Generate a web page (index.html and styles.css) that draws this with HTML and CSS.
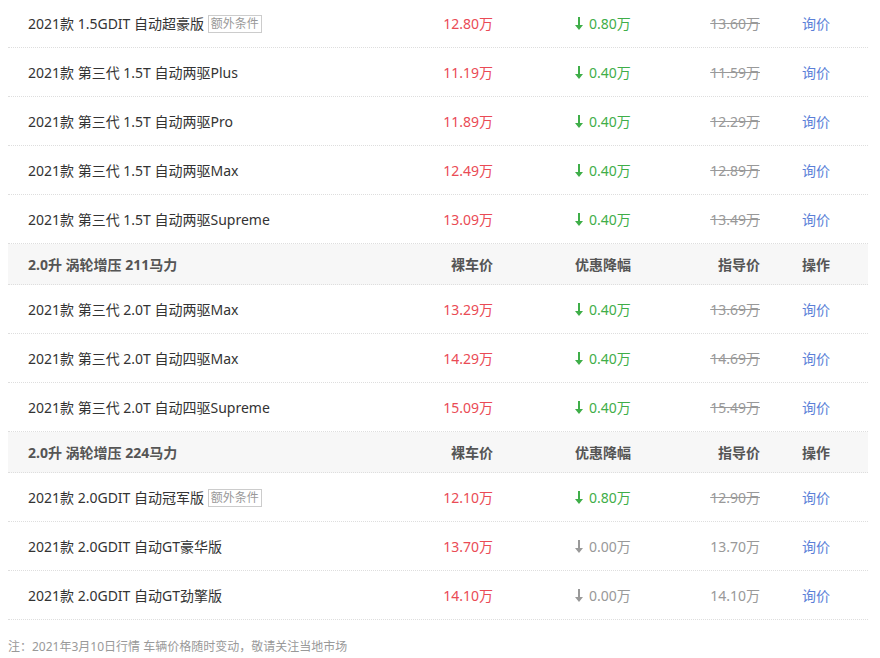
FILE: index.html
```html
<!DOCTYPE html>
<html lang="zh-CN">

<head>
  <meta charset="UTF-8">
  <title>车型报价</title>
  <link rel="stylesheet" href="styles.css">
</head>

<body>
  <div id="price-list">
    <div class="row">
      <div class="cell name">2021款 1.5GDIT 自动超豪版 <span class="tag">额外条件</span></div>
      <div class="cell price">12.80万</div>
      <div class="cell cut"><svg class="arrow" viewBox="0 0 8 13"><path d="M3 0h2v8h3l-4 5l-4-5h3z"/></svg>0.80万</div>
      <div class="cell guide old">13.60万</div>
      <div class="cell action"><a href="#">询价</a></div>
    </div>
    <div class="row">
      <div class="cell name">2021款 第三代 1.5T 自动两驱Plus</div>
      <div class="cell price">11.19万</div>
      <div class="cell cut"><svg class="arrow" viewBox="0 0 8 13"><path d="M3 0h2v8h3l-4 5l-4-5h3z"/></svg>0.40万</div>
      <div class="cell guide old">11.59万</div>
      <div class="cell action"><a href="#">询价</a></div>
    </div>
    <div class="row">
      <div class="cell name">2021款 第三代 1.5T 自动两驱Pro</div>
      <div class="cell price">11.89万</div>
      <div class="cell cut"><svg class="arrow" viewBox="0 0 8 13"><path d="M3 0h2v8h3l-4 5l-4-5h3z"/></svg>0.40万</div>
      <div class="cell guide old">12.29万</div>
      <div class="cell action"><a href="#">询价</a></div>
    </div>
    <div class="row">
      <div class="cell name">2021款 第三代 1.5T 自动两驱Max</div>
      <div class="cell price">12.49万</div>
      <div class="cell cut"><svg class="arrow" viewBox="0 0 8 13"><path d="M3 0h2v8h3l-4 5l-4-5h3z"/></svg>0.40万</div>
      <div class="cell guide old">12.89万</div>
      <div class="cell action"><a href="#">询价</a></div>
    </div>
    <div class="row">
      <div class="cell name">2021款 第三代 1.5T 自动两驱Supreme</div>
      <div class="cell price">13.09万</div>
      <div class="cell cut"><svg class="arrow" viewBox="0 0 8 13"><path d="M3 0h2v8h3l-4 5l-4-5h3z"/></svg>0.40万</div>
      <div class="cell guide old">13.49万</div>
      <div class="cell action"><a href="#">询价</a></div>
    </div>

    <div class="row group">
      <div class="cell name">2.0升 涡轮增压 211马力</div>
      <div class="cell price">裸车价</div>
      <div class="cell cut">优惠降幅</div>
      <div class="cell guide">指导价</div>
      <div class="cell action">操作</div>
    </div>
    <div class="row">
      <div class="cell name">2021款 第三代 2.0T 自动两驱Max</div>
      <div class="cell price">13.29万</div>
      <div class="cell cut"><svg class="arrow" viewBox="0 0 8 13"><path d="M3 0h2v8h3l-4 5l-4-5h3z"/></svg>0.40万</div>
      <div class="cell guide old">13.69万</div>
      <div class="cell action"><a href="#">询价</a></div>
    </div>
    <div class="row">
      <div class="cell name">2021款 第三代 2.0T 自动四驱Max</div>
      <div class="cell price">14.29万</div>
      <div class="cell cut"><svg class="arrow" viewBox="0 0 8 13"><path d="M3 0h2v8h3l-4 5l-4-5h3z"/></svg>0.40万</div>
      <div class="cell guide old">14.69万</div>
      <div class="cell action"><a href="#">询价</a></div>
    </div>
    <div class="row">
      <div class="cell name">2021款 第三代 2.0T 自动四驱Supreme</div>
      <div class="cell price">15.09万</div>
      <div class="cell cut"><svg class="arrow" viewBox="0 0 8 13"><path d="M3 0h2v8h3l-4 5l-4-5h3z"/></svg>0.40万</div>
      <div class="cell guide old">15.49万</div>
      <div class="cell action"><a href="#">询价</a></div>
    </div>

    <div class="row group">
      <div class="cell name">2.0升 涡轮增压 224马力</div>
      <div class="cell price">裸车价</div>
      <div class="cell cut">优惠降幅</div>
      <div class="cell guide">指导价</div>
      <div class="cell action">操作</div>
    </div>
    <div class="row">
      <div class="cell name">2021款 2.0GDIT 自动冠军版 <span class="tag">额外条件</span></div>
      <div class="cell price">12.10万</div>
      <div class="cell cut"><svg class="arrow" viewBox="0 0 8 13"><path d="M3 0h2v8h3l-4 5l-4-5h3z"/></svg>0.80万</div>
      <div class="cell guide old">12.90万</div>
      <div class="cell action"><a href="#">询价</a></div>
    </div>
    <div class="row">
      <div class="cell name">2021款 2.0GDIT 自动GT豪华版</div>
      <div class="cell price">13.70万</div>
      <div class="cell cut zero"><svg class="arrow" viewBox="0 0 8 13"><path d="M3 0h2v8h3l-4 5l-4-5h3z"/></svg>0.00万</div>
      <div class="cell guide">13.70万</div>
      <div class="cell action"><a href="#">询价</a></div>
    </div>
    <div class="row">
      <div class="cell name">2021款 2.0GDIT 自动GT劲擎版</div>
      <div class="cell price">14.10万</div>
      <div class="cell cut zero"><svg class="arrow" viewBox="0 0 8 13"><path d="M3 0h2v8h3l-4 5l-4-5h3z"/></svg>0.00万</div>
      <div class="cell guide">14.10万</div>
      <div class="cell action"><a href="#">询价</a></div>
    </div>
  </div>
  <p class="note">注：2021年3月10日行情 车辆价格随时变动，敬请关注当地市场</p>
</body>

</html>
```

FILE: styles.css
```css
body {
  margin: 0;
  padding: 0 8px;
  background-color: #fff;
  font-family: "Noto Sans", "Noto Sans CJK SC", sans-serif;
  font-size: 14px;
  color: #333;
}

#price-list {
  width: 860px;
  margin-top: -1px;
}

.row {
  display: grid;
  grid-template-columns: 412px 80px 136px 130px 102px;
  height: 48px;
  align-items: center;
  border-bottom: 1px dotted #dedede;
}

.group {
  height: 40px;
  background-color: #f7f7f7;
  font-weight: bold;
  color: #555;
}

.cell {
  white-space: nowrap;
}

.name {
  padding-left: 20px;
}

.price {
  text-align: right;
  padding-right: 7px;
  color: #ea4b55;
}

.group .price,
.group .cut {
  color: #555;
}

.cut {
  padding-left: 75px;
  color: #3fae49;
  display: flex;
  align-items: center;
}

.arrow {
  width: 8px;
  height: 13px;
  margin-right: 6px;
  fill: #3fae49;
}

.zero {
  color: #999;
}

.zero .arrow {
  fill: #999;
}

.guide {
  text-align: right;
  padding-right: 6px;
  color: #999;
}

.group .guide {
  color: #555;
}

.old {
  text-decoration: line-through;
}

.action {
  padding-left: 36px;
}

.action a {
  color: #5b7fd8;
  text-decoration: none;
}

.tag {
  display: inline-block;
  font-size: 12px;
  line-height: 16px;
  padding: 0 2px;
  border: 1px solid #ccc;
  color: #999;
  vertical-align: 1px;
}

.note {
  margin: 17px 0 0;
  font-size: 12px;
  color: #999;
}
```
